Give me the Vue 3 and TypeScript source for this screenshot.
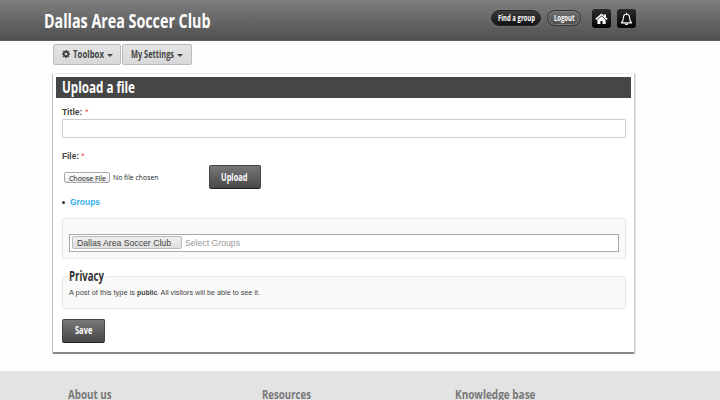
<script setup lang="ts">
import { h } from 'vue'

interface FitProps {
  text: string
  size: number
  width: number
}

// Text set to a fixed measure, its baseline sitting `size` (rounded) below the top.
const FitText = (props: FitProps) =>
  h('svg', { width: props.width, height: Math.round(props.size) + 4 }, [
    h(
      'text',
      {
        x: 0,
        y: Math.round(props.size),
        'font-size': props.size,
        textLength: props.width,
        lengthAdjust: 'spacingAndGlyphs',
        fill: 'currentColor',
      },
      props.text,
    ),
  ])
FitText.props = ['text', 'size', 'width']

const columns = [
  { text: 'About us', width: 43.5 },
  { text: 'Resources', width: 49 },
  { text: 'Knowledge base', width: 80.5 },
]
</script>

<template>
  <div class="page">
    <header class="top">
      <FitText class="narrow brand" text="Dallas Area Soccer Club" :size="20.4" :width="166.5" />
      <nav class="actions">
        <a class="pill dark"><FitText class="narrow" text="Find a group" :size="9" :width="37" /></a>
        <a class="pill light"><FitText class="narrow" text="Logout" :size="9" :width="20.5" /></a>
        <a class="tile home">
          <svg width="13" height="12" viewBox="0 0 13 12">
            <path d="M.8 6.4 6.5 1.4l5.7 5" fill="none" stroke="#fff" stroke-width="1.5" />
            <path d="M9.3 1.2h1.6v3.6L9.3 3.4z" fill="#fff" />
            <path d="M2.4 6.8 6.5 3.2l4.1 3.6V11H7.6V8H5.4v3h-3z" fill="#fff" />
          </svg>
        </a>
        <a class="tile">
          <svg width="13" height="14" viewBox="0 0 13 14" fill="none" stroke="#fff" stroke-width="1.1">
            <path d="M6.5 .8v1.4M1.4 10.9c1.5-1.3 2-2.6 2-5.1 0-2.2 1.1-3.5 3.1-3.5s3.1 1.3 3.1 3.5c0 2.5.5 3.8 2 5.1z" stroke-linejoin="round" />
            <path d="M5.1 11.4c.2 1.5 2.6 1.5 2.8 0" />
          </svg>
        </a>
      </nav>
    </header>

    <div class="menus">
      <button class="menu">
        <svg class="gear" width="8" height="8" viewBox="0 0 8 8">
          <g stroke="#444" stroke-width="1.7">
            <path d="M4 0v8M0 4h8M1.2 1.2l5.6 5.6M6.8 1.2 1.2 6.8" />
          </g>
          <circle cx="4" cy="4" r="2.9" fill="#444" />
          <circle cx="4" cy="4" r="1.3" fill="#ddd" />
        </svg>
        <FitText class="narrow" text="Toolbox" :size="10.4" :width="31" />
        <i class="caret"></i>
      </button>
      <button class="menu">
        <FitText class="narrow" text="My Settings" :size="10.4" :width="43" />
        <i class="caret"></i>
      </button>
    </div>

    <main class="card">
      <h1 class="bar"><FitText class="narrow" text="Upload a file" :size="15.6" :width="73" /></h1>
      <form class="form" @submit.prevent>
        <div class="label">
          <FitText class="bold" text="Title:" :size="8.4" :width="20.5" />
          <FitText class="req" text="*" :size="8.4" :width="3.6" />
        </div>
        <div class="input"></div>
        <div class="label second">
          <FitText class="bold" text="File:" :size="8.4" :width="17" />
          <FitText class="req" text="*" :size="8.4" :width="3.6" />
        </div>
        <div class="file">
          <span class="choose"><FitText class="lucida" text="Choose File" :size="7.3" :width="37" /></span>
          <FitText class="lucida none" text="No file chosen" :size="7.3" :width="45.5" />
          <button class="button upload"><FitText class="narrow" text="Upload" :size="11" :width="26.5" /></button>
        </div>
        <div class="groups">
          <i class="dot"></i>
          <FitText class="bold" text="Groups" :size="8.4" :width="30" />
        </div>
        <section class="panel picker">
          <div class="tags">
            <span class="tag"><FitText text="Dallas Area Soccer Club" :size="8.4" :width="94" /></span>
            <FitText class="hint" text="Select Groups" :size="8.4" :width="55" />
          </div>
        </section>
        <section class="panel privacy">
          <div class="legend"><FitText class="narrow" text="Privacy" :size="13.4" :width="35" /></div>
          <p class="note">
            <FitText text="A post of this type is" :size="7.2" :width="66" />
            <FitText class="bold" text="public" :size="7.2" :width="20.3" />
            <FitText text=". All visitors will be able to see it." :size="7.2" :width="103" />
          </p>
        </section>
        <button class="button save"><FitText class="narrow" text="Save" :size="11" :width="17.3" /></button>
      </form>
    </main>

    <footer class="footer">
      <div v-for="c in columns" :key="c.text">
        <FitText class="narrow" :text="c.text" :size="13" :width="c.width" />
      </div>
    </footer>
  </div>
</template>

<style>
body {
  background: #fefefe;
}
</style>

<style scoped>
.page {
  box-sizing: border-box;
  width: 720px;
  height: 400px;
  overflow: hidden;
  font-family: "Liberation Sans", Arial, sans-serif;
  color: #444;
}
.page * {
  box-sizing: border-box;
}
svg {
  display: block;
  flex: none;
  overflow: visible;
}
.narrow {
  font-family: "Open Sans", "Noto Sans", sans-serif;
  font-weight: 700;
}
.bold {
  font-weight: 700;
}
.lucida {
  font-family: "Open Sans", sans-serif;
  font-weight: 500;
  color: #222;
}
button {
  margin: 0;
  padding: 0;
  color: inherit;
  font: inherit;
}
.top {
  display: flex;
  justify-content: space-between;
  height: 41px;
  padding: 8px 84px 0 44px;
  background: linear-gradient(#7e7e7e, #505050);
  border-bottom: 1px solid #5c5c5c;
  color: #fff;
}
.actions {
  display: flex;
  align-items: flex-start;
}
.pill {
  display: flex;
  justify-content: center;
  height: 16px;
  margin-top: 2px;
  padding-top: 1px;
  border: 1px solid #222;
  border-radius: 8px;
}
.dark {
  width: 50px;
  background: linear-gradient(#3c3c3c, #111);
  box-shadow: 0 0 1px #aaa;
}
.light {
  width: 34px;
  margin-left: 6px;
  background: linear-gradient(#707070, #505050);
  border-color: #333;
  box-shadow: inset 0 0 0 1px #7c7c7c;
}
.tile {
  display: flex;
  align-items: center;
  justify-content: center;
  width: 19px;
  height: 19px;
  margin: 1px 0 0 6px;
  background: linear-gradient(#2c2c2c, #030303);
  border-radius: 3px;
}
.home {
  margin-left: 11px;
}
.menus {
  display: flex;
  gap: 1px;
  padding: 3px 0 0 53px;
}
.menu {
  display: flex;
  width: 68px;
  height: 21px;
  padding: 3px 0 0 8px;
  background: linear-gradient(#e4e4e4, #d8d8d8);
  border: 1px solid #bbb;
  border-radius: 2px;
}
.gear {
  margin: 2px 3px 0 0;
}
.menu + .menu {
  width: 70px;
}
.caret {
  margin: 6px 0 0 3px;
  border: 3px solid transparent;
  border-top: 3px solid #444;
  border-bottom: 0;
}
.card {
  width: 583px;
  height: 281px;
  margin: 8px 0 0 52px;
  padding: 3px;
  background: #fff;
  border: 1px solid #eee;
  border-left-color: #bbb;
  border-right: 1px solid #ccc;
  border-bottom: 2px solid #888;
  border-radius: 2px;
  box-shadow: 1px 0 0 #e2e2e2;
}
.bar {
  height: 21px;
  width: 575px;
  margin: 0;
  padding: 0 0 0 6px;
  background: #464646;
  color: #fff;
}
.form {
  padding: 9px 6px 0;
}
.label {
  display: flex;
  gap: 2px;
  height: 12px;
}
.req {
  color: #f05050;
}
.input {
  width: 564px;
  height: 19px;
  background: #fff;
  border: 1px solid #ccc;
  border-radius: 1px;
}
.second {
  margin-top: 13px;
}
.file {
  display: flex;
  height: 24px;
  margin: 2px 0 8px 2px;
}
.choose {
  display: flex;
  justify-content: center;
  width: 46px;
  height: 11px;
  margin-top: 7px;
  padding-top: 1px;
  background: linear-gradient(#fff, #e6e6e6);
  border: 1px solid #aaa;
  border-radius: 2px;
}
.none {
  margin: 8px 50px 0 3px;
}
.button {
  display: flex;
  justify-content: center;
  height: 24px;
  background: linear-gradient(#777, #484848);
  border: 1px solid #444;
  border-bottom-color: #222;
  border-radius: 2px;
  color: #fff;
}
.upload {
  width: 52px;
  padding-top: 4px;
}
.save {
  width: 43px;
  margin-top: 10px;
  padding-top: 3px;
}
.groups {
  display: flex;
  height: 21px;
  color: #30aeea;
}
.dot {
  width: 3px;
  height: 3px;
  margin: 4px 5px 0 0;
  background: #333;
  border-radius: 50%;
}
.panel {
  width: 564px;
  background: #f9f9f9;
  border: 1px solid #e9e9e9;
  border-radius: 2px;
}
.picker {
  height: 41px;
  padding: 15px 6px;
}
.tags {
  display: flex;
  height: 18px;
  width: 550px;
  padding: 1px 2px;
  background: #fff;
  border: 1px solid #aaa;
}
.tag {
  width: 110px;
  height: 13px;
  margin-right: 3px;
  padding: 1px 0 0 4px;
  background: linear-gradient(#f0f0f0, #dfdfdf);
  border: 1px solid #bbb;
  border-radius: 2px;
}
.hint {
  margin-top: 2px;
  color: #999;
}
.privacy {
  height: 33px;
  margin-top: 17px;
  padding-left: 6px;
}
.legend {
  width: 38px;
  height: 12px;
  margin-top: -9px;
  color: #333;
  background: linear-gradient(#fff 70%, #f9f9f9 70%);
}
.note {
  display: flex;
  gap: 2px;
  height: 12px;
  margin: 8px 0 0;
}
.note svg:last-child {
  margin-left: -2px;
}
.footer {
  display: grid;
  grid-template-columns: 193.5px 193.5px 1fr;
  height: 30px;
  margin-top: 17px;
  padding: 15px 0 0 68px;
  background: #e3e3e3;
  color: #777;
}
</style>
